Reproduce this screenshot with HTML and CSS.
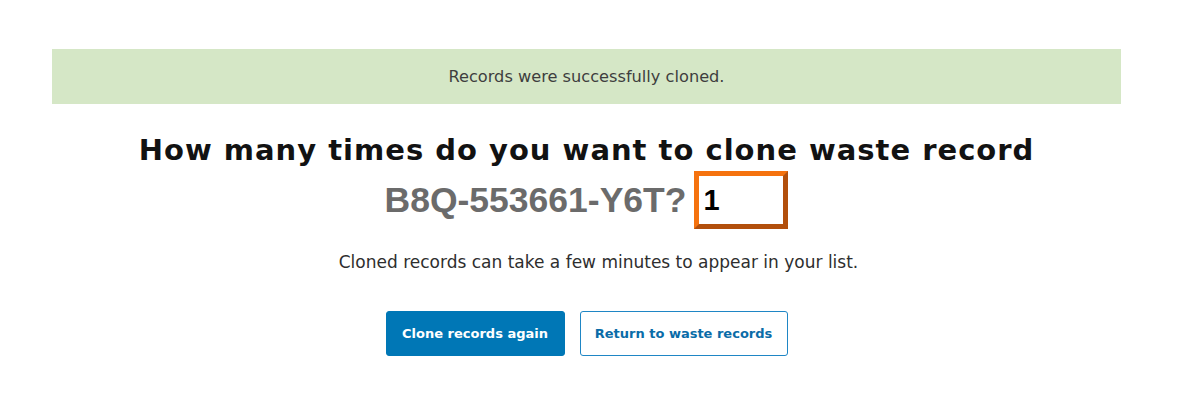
FILE: index.html
```html
<!DOCTYPE html>
<html lang="en">
<head>
<meta charset="utf-8">
<title>Clone records</title>
<link rel="stylesheet" href="styles.css">
</head>
<body>
<main class="page">
  <div class="banner">Records were successfully cloned.</div>
  <h1 class="title">
    <span class="title-line">How many times do you want to clone waste record</span>
    <span class="title-row">
      <span class="record-id">B8Q-553661-Y6T?</span>
      <span class="count-box">1</span>
    </span>
  </h1>
  <p class="note">Cloned records can take a few minutes to appear in your list.</p>
  <div class="actions">
    <button class="btn btn-primary" type="button">Clone records again</button>
    <button class="btn btn-secondary" type="button">Return to waste records</button>
  </div>
</main>
</body>
</html>
```
FILE: styles.css
```css
html, body {
  margin: 0;
  padding: 0;
  background: #ffffff;
}
body {
  font-family: "DejaVu Sans", Verdana, sans-serif;
  color: #1b1b1b;
}
.page {
  width: 1069px;
  margin-left: 52px;
  padding-top: 49px;
  display: flex;
  flex-direction: column;
  align-items: center;
}
.banner {
  align-self: stretch;
  height: 55px;
  background: #d5e7c6;
  color: #3e3e3e;
  font-size: 16.2px;
  display: flex;
  align-items: center;
  justify-content: center;
}
.title {
  margin: 28px 0 0;
  display: flex;
  flex-direction: column;
  align-items: center;
  font-weight: 700;
}
.title-line {
  font-size: 29px;
  line-height: 36px;
  letter-spacing: 1px;
  color: #121212;
}
.title-row {
  margin-top: 3px;
  display: flex;
  align-items: center;
  gap: 8px;
}
.record-id {
  font-family: "Liberation Sans", Arial, sans-serif;
  font-weight: 700;
  font-size: 35.5px;
  color: #6b6b6b;
}
.count-box {
  box-sizing: border-box;
  width: 94px;
  height: 58px;
  border: 5px solid;
  border-color: #f5720e #b24f0c #b24f0c #f5720e;
  padding-left: 4px;
  font-family: "Liberation Sans", Arial, sans-serif;
  font-weight: 700;
  font-size: 29px;
  line-height: 48px;
  color: #000;
}
.note {
  margin: 23px 0 0 24px;
  font-size: 17px;
  line-height: 20px;
  color: #2e2e2e;
}
.actions {
  margin-top: 39px;
  display: flex;
  gap: 15px;
}
.btn {
  box-sizing: border-box;
  height: 45px;
  border-radius: 3px;
  font-family: "DejaVu Sans", Verdana, sans-serif;
  font-weight: 700;
  font-size: 13px;
  cursor: pointer;
}
.btn-primary {
  width: 179px;
  background: #0077b6;
  border: 1px solid #0077b6;
  color: #ffffff;
}
.btn-secondary {
  width: 208px;
  background: #ffffff;
  border: 1px solid #1f86c5;
  color: #0a6ca8;
}
```
